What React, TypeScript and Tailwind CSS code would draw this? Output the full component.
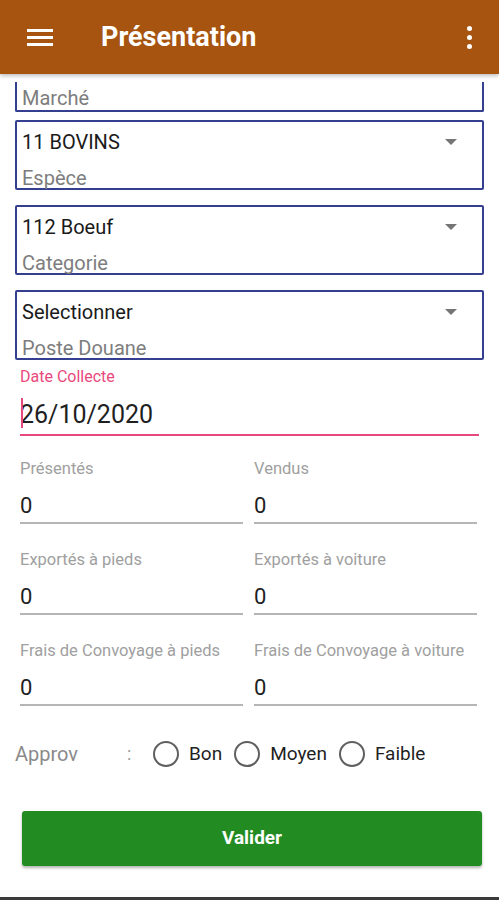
import React from "react";

/* ── Small pieces ─────────────────────────── */
function Caret() {
  return (
    <svg width="14" height="8" viewBox="0 0 14 8" className="shrink-0">
      <path d="M1 1h12L7 7z" fill="#757575" />
    </svg>
  );
}

function SelectBox({ value, label }: { value: string; label: string }) {
  return (
    <div className="mx-[15px] h-[70px] border-2 border-[#34408f] rounded-[2px] flex flex-col pl-[5px] pr-[24px]">
      <div className="mt-[8px] h-[24px] flex items-center justify-between">
        <span className="text-[20px] leading-[24px] text-[#1a1a1a]">{value}</span>
        <Caret />
      </div>
      <span className="mt-[12px] text-[20px] leading-[24px] text-[#7d7d7d]">{label}</span>
    </div>
  );
}

function NumField({ label, value }: { label: string; value: string }) {
  return (
    <div className="flex flex-col">
      <span className="text-[16.5px] leading-[18px] text-[#a0a0a0] whitespace-nowrap">{label}</span>
      <span className="mt-[15px] text-[22px] leading-[26px] text-[#1f1f1f]">{value}</span>
      <div className="mt-[3px] h-[2px] bg-[#b5b5b5]" />
    </div>
  );
}

function Radio({ label }: { label: string }) {
  return (
    <label className="flex items-center mr-[12px]">
      <span className="w-[26px] h-[26px] rounded-full border-2 border-[#5f5f5f]" />
      <span className="ml-[10px] text-[19px] leading-[24px] text-[#1f1f1f]">{label}</span>
    </label>
  );
}

const fields = [
  { label: "Présentés", value: "0" },
  { label: "Vendus", value: "0" },
  { label: "Exportés à pieds", value: "0" },
  { label: "Exportés à voiture", value: "0" },
  { label: "Frais de Convoyage à pieds", value: "0" },
  { label: "Frais de Convoyage à voiture", value: "0" },
];

export default function App() {
  return (
    <div
      className="w-[499px] h-[900px] bg-white flex flex-col overflow-hidden"
      style={{ fontFamily: "Roboto, 'Noto Sans', sans-serif" }}
    >
      {/* ── Toolbar ───────────────────────── */}
      <header className="relative z-10 h-[74px] shrink-0 bg-[#a6540f] flex items-center shadow-[0_2px_4px_rgba(0,0,0,0.25)]">
        <div className="ml-[27px] w-[26px] flex flex-col gap-[4px]">
          <span className="h-[3px] bg-white" />
          <span className="h-[3px] bg-white" />
          <span className="h-[3px] bg-white" />
        </div>
        <h1 className="ml-[48px] text-[27px] leading-[30px] font-bold text-white">Présentation</h1>
        <div className="ml-auto mr-[27px] flex flex-col gap-[4px]">
          <span className="w-[5px] h-[5px] rounded-full bg-white" />
          <span className="w-[5px] h-[5px] rounded-full bg-white" />
          <span className="w-[5px] h-[5px] rounded-full bg-white" />
        </div>
      </header>

      {/* ── Scrolled-off Marché field ─────── */}
      <div className="mx-[15px] mt-[8px] h-[30px] border-2 border-t-0 border-[#34408f] rounded-b-[2px] pl-[5px] pt-[4px]">
        <span className="text-[20px] leading-[24px] text-[#7d7d7d]">Marché</span>
      </div>

      <div className="mt-[8px] flex flex-col gap-[15px]">
        <SelectBox value="11 BOVINS" label="Espèce" />
        <SelectBox value="112 Boeuf" label="Categorie" />
        <SelectBox value="Selectionner" label="Poste Douane" />
      </div>

      {/* ── Date ──────────────────────────── */}
      <div className="mx-[20px] mt-[8px] flex flex-col">
        <span className="text-[16px] leading-[18px] text-[#e8497d]">Date Collecte</span>
        <div className="relative mt-[15px] h-[28px]">
          <span className="absolute left-[1px] top-[-3px] w-[2px] h-[30px] bg-[#e8497d]" />
          <span className="text-[25px] leading-[28px] text-[#1f1f1f]">26/10/2020</span>
        </div>
        <div className="mt-[5px] h-[2px] bg-[#e8497d]" />
      </div>

      {/* ── Counts ────────────────────────── */}
      <div className="mx-[20px] mt-[24px] grid grid-cols-2 gap-x-[11px] gap-y-[27px] w-[457px]">
        {fields.map((f) => (
          <NumField key={f.label} label={f.label} value={f.value} />
        ))}
      </div>

      {/* ── Approv ────────────────────────── */}
      <div className="mt-[34px] h-[28px] pl-[15px] flex items-center">
        <span className="w-[112px] text-[20px] leading-[24px] text-[#8a8a8a]">Approv</span>
        <span className="w-[26px] text-[18px] leading-[24px] text-[#9a9a9a]">:</span>
        <Radio label="Bon" />
        <Radio label="Moyen" />
        <Radio label="Faible" />
      </div>

      {/* ── Submit ────────────────────────── */}
      <button className="mx-[22px] mt-[43px] h-[55px] w-[460px] rounded-[3px] bg-[#228b22] text-white text-[19px] font-bold shadow-[0_2px_3px_rgba(0,0,0,0.3)]">
        Valider
      </button>

      <div className="flex-1" />
      <div className="h-[3px] bg-[#3a3a3a]" />
    </div>
  );
}
